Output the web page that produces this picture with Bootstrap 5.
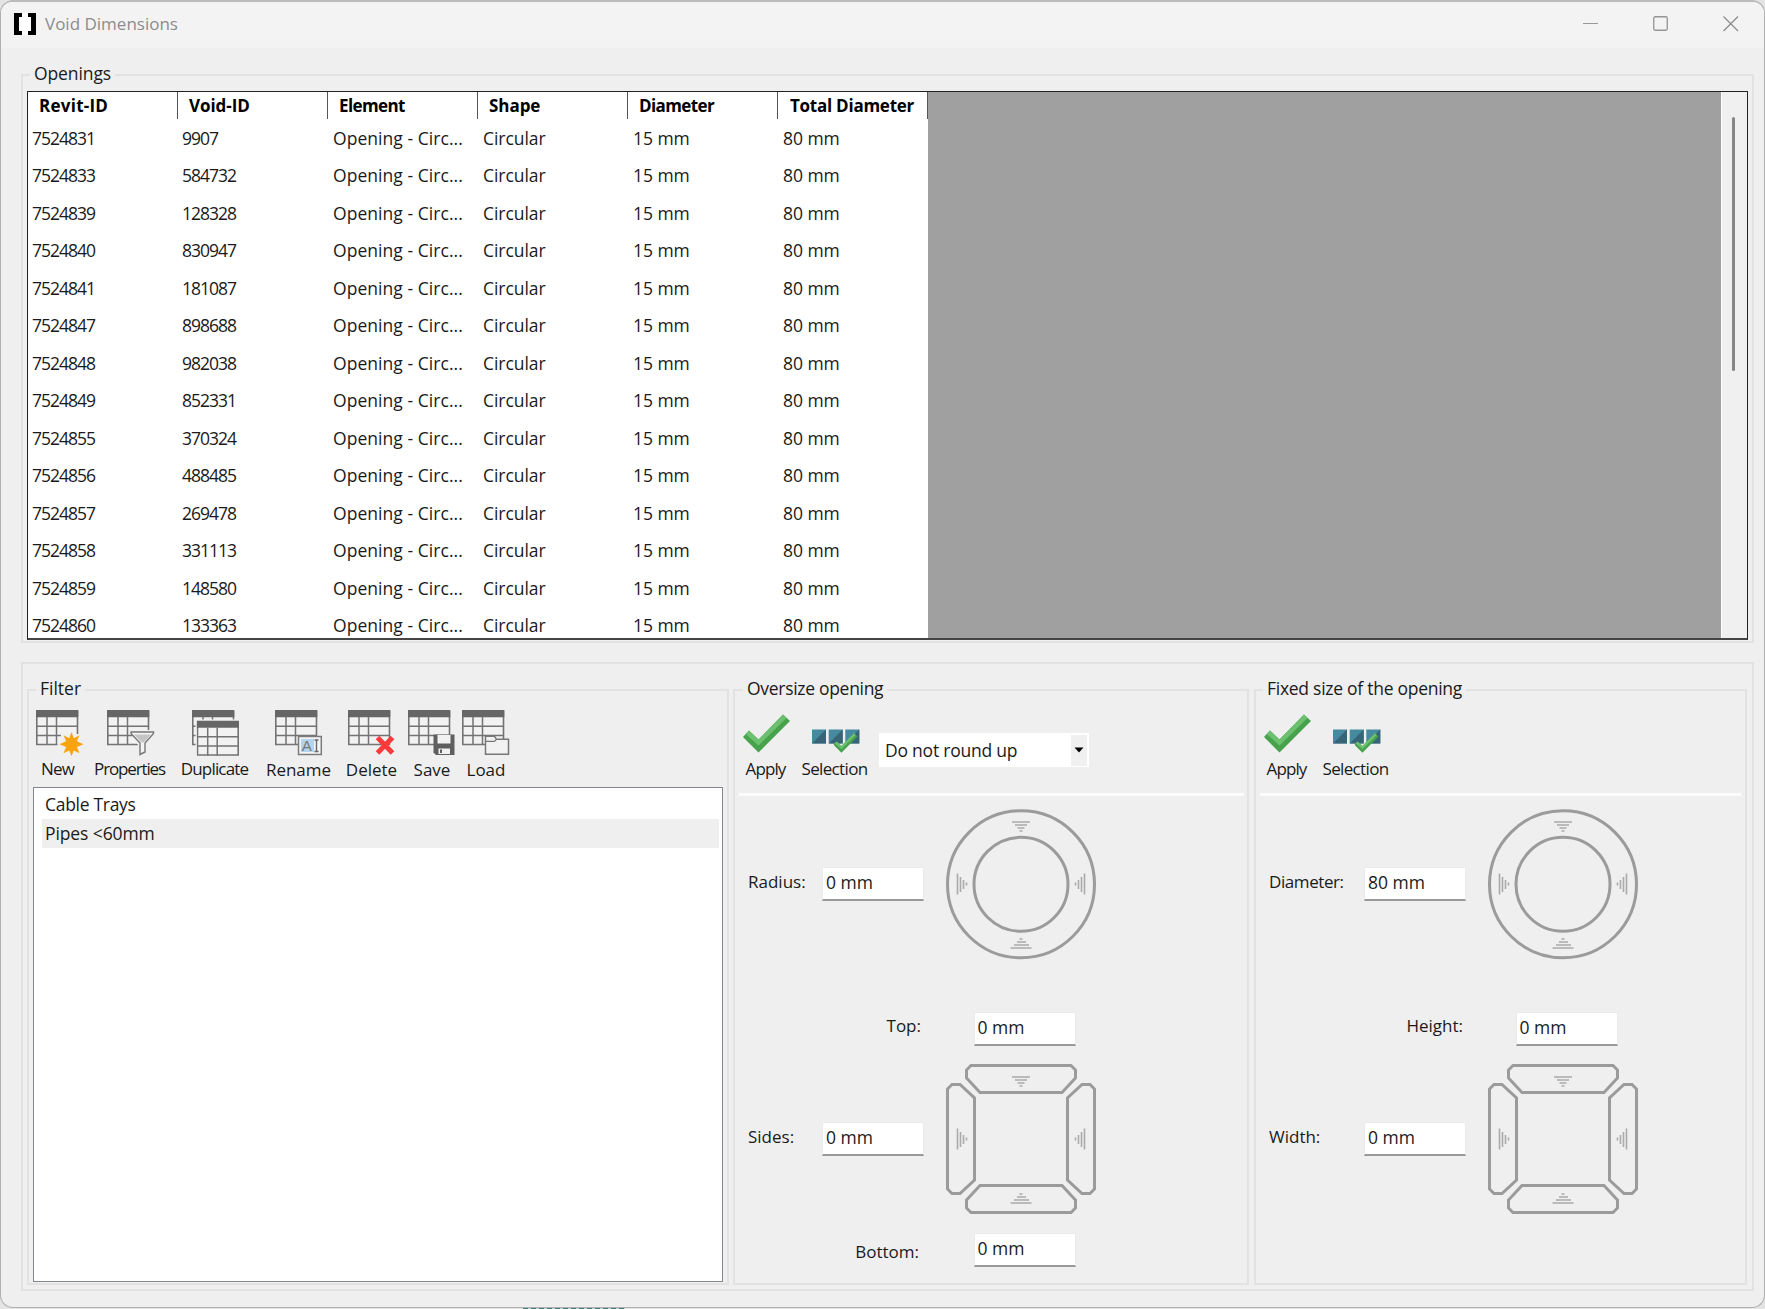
<!DOCTYPE html>
<html lang="en">
<head>
  <meta charset="UTF-8">
  <meta name="viewport" content="width=device-width, initial-scale=1.0">
  <title>Void Dimensions</title>
  <link href="https://cdn.jsdelivr.net/npm/bootstrap@5.3.0/dist/css/bootstrap.min.css" rel="stylesheet">
  <style>
  body {
    background: #e4e4e4;
    color: #1a1a1a;
    font-family: "Open Sans", "Noto Sans", sans-serif;
    font-size: 17.5px;
    line-height: 24px;
    overflow: hidden;
  }
  .app-window {
    width: 1765px;
    height: 1308px;
    background: #efefef;
    border: 1px solid #b0b0b0;
    border-top: 2px solid #bbb;
    border-radius: 13px;
    overflow: hidden;
  }
  .title-bar {
    height: 46px;
    padding: 0 25px 2px 12px;
    background: #f3f3f3;
    color: #8c8c8c;
    font-size: 17px;
  }
  .win-buttons { gap: 54px; }
  .main-area { padding: 26px 10px 0 20px; }

  .group-box { border: 2px solid #e2e2e2; }
  .group-title {
    align-self: flex-start;
    background: #efefef;
    white-space: nowrap;
    height: 24px;
    line-height: 23px;
    margin-top: -14px;
    padding: 0 4px;
  }
  .openings-box { height: 569px; padding: 0 4px; }
  .openings-box > .group-title { margin-left: 3px; letter-spacing: -.1px; }
  .openings-grid {
    height: 549px;
    margin-top: 5px;
    background: #a0a0a0;
    border: 1px solid #222;
    border-bottom: 2px solid #444;
    overflow: hidden;
  }
  .grid-table {
    width: 900px;
    background: #fff;
    flex: none;
  }
  .grid-line {
    display: grid;
    grid-template-columns: repeat(6, 150px);
    height: 37.5px;
    align-items: center;
    white-space: nowrap;
  }
  .grid-line > span { padding-left: 5px; letter-spacing: -.05px; }
  .grid-line > .id-cell { padding-left: 4px; letter-spacing: -1px; }
  .grid-line > .long-cell { letter-spacing: .05px; }
  .grid-head {
    height: 27px;
    font-size: 17px;
    font-weight: 700;
    color: #000;
    align-items: stretch;
  }
  .grid-head > span {
    padding: 2px 0 0 11px;
    border-right: 1px solid #555;
  }
  .grid-head > .head-wide { letter-spacing: .25px; }
  .grid-head > .head-tight { letter-spacing: -.6px; }
  .grid-head > .head-snug { padding-left: 12px; letter-spacing: -.25px; }
  .scroll-track {
    width: 26px;
    background: #f0f0f0;
    border-left: 1px solid #fff;
    padding: 25px 0 0 10px;
  }
  .scroll-thumb {
    width: 3px;
    height: 254px;
    border-radius: 2px;
    background: #868686;
  }

  .settings-box {
    height: 629px;
    margin-top: 19px;
    padding: 25px 5px 4px 4px;
  }
  .filter-box { width: 702px; margin-right: 4px; padding: 0 4px; }
  .oversize-box { width: 516px; margin-right: 5px; }
  .fixed-box { width: 493px; }
  .filter-box > .group-title { margin-left: 3px; }
  .oversize-box > .group-title { margin-left: 8px; letter-spacing: -.3px; }
  .fixed-box > .group-title { margin-left: 7px; letter-spacing: -.27px; }

  .tool-bar { height: 86px; padding-top: 9px; font-size: 17px; }
  .tool-item {
    white-space: nowrap;
    display: flex;
    flex-direction: column;
    align-items: center;
  }
  .tool-item svg { display: block; flex: none; margin-bottom: 1px; }
  .tool-item.lower svg { margin-bottom: 2px; }
  .tool-item.squeezed > span { margin-left: -2px; }
  .w-new { width: 53px; letter-spacing: -.8px; }
  .w-new > span { padding-right: 2px; }
  .w-props { width: 89px; letter-spacing: -1.15px; }
  .w-dup { width: 81px; letter-spacing: -.8px; }
  .w-rename { width: 85px; }
  .w-del { width: 61px; }
  .w-save { width: 60px; }
  .w-load { width: 48px; }
  .filter-list {
    height: 495px;
    background: #fff;
    border: 1px solid #828790;
    padding: 2px 3px 0 8px;
  }
  .filter-item { height: 29px; line-height: 29px; padding-left: 3px; letter-spacing: -.3px; }
  .filter-item.picked { background: #efefef; letter-spacing: -.1px; }

  .size-tools {
    height: 95px;
    margin: 0 3px 0 4px;
    padding: 13px 0 0 4px;
    border-bottom: 3px solid #fbfcfe;
    font-size: 17px;
  }
  .fixed-box .size-tools { margin-right: 4px; }
  .size-tools .tool-item { height: 67px; justify-content: flex-end; }
  .size-tools .tool-item svg { margin-bottom: 4px; }
  .w-apply { width: 47px; letter-spacing: -.9px; }
  .w-sel { width: 67px; margin-left: 12px; letter-spacing: -.65px; }
  .combo {
    width: 210px;
    height: 34px;
    margin: 19px 0 0 10px;
    padding: 0 2px 0 6px;
    background: #fff;
    font-size: 17.5px;
    letter-spacing: -.22px;
  }
  .combo-arrow { width: 16px; height: 31px; background: #f0f0f0; }

  .size-form { padding: 12px 0 0 13px; font-size: 17px; }
  .name-left { width: 74px; padding-bottom: 5px; }
  .fixed-box .name-left { width: 95px; }
  .name-left.snug { letter-spacing: -.42px; }
  .name-right { width: 173px; padding-bottom: 7px; text-align: right; }
  .name-right.low { padding: 4px 2px 0 0; }
  .fixed-box .name-right { width: 194px; }
  .pad-field {
    width: 102px;
    height: 34px;
    line-height: 29px;
    padding-left: 3px;
    background: #fff;
    border: 1px solid #ebebeb;
    border-bottom: 2px solid #999;
    font-size: 17.5px;
    white-space: nowrap;
    flex: none;
  }
  .name-right + .pad-field { margin-left: 52.5px; }
  .shape { width: 152px; height: 152px; display: block; flex: none; margin-left: 21px; }
  .upper-line { margin: 52px 0 17px; }
  .lower-line { margin-top: 18px; }
  .behind {
    width: 102px;
    height: 1px;
    margin-left: 523px;
    background: repeating-linear-gradient(90deg, #3c8078 0 5px, #b9cfcb 5px 8px);
  }
  </style>
</head>
<body>

<svg width="0" height="0" class="position-absolute">
  <defs>
    <symbol id="table" viewBox="0 0 48 46">
      <path d="M.800 1.500h40.700v33H.800z" fill="#f2f2f2" stroke="#737373" stroke-width="1.600"/>
      <path d="M0 0h42.300v7.300H0z" fill="#666"/>
      <path d="M11 7v28M20.500 7v28M1 16.200h41M1 25.500h41" stroke="#737373" stroke-width="1.500" fill="none"/>
    </symbol>
    <symbol id="tick" viewBox="0 0 47 39">
      <path d="M0 23l6-6.500 9.500 9L40 .500l7 6.500-31.500 31.500z" fill="#46a24b"/>
      <path d="M2.500 20l3.500-3.500 9.500 9L40 .500l3.500 3.500-28 27.500z" fill="#6cc070"/>
    </symbol>
    <symbol id="selection" viewBox="0 0 48 24">
      <path d="M0 .5h14v14H0zM16.700.5h14v14h-14zM33.300.5h14v14h-14z" fill="#468aa0"/>
      <path d="M14 .5v14H0zM30.700.5v14h-14zM47.300.5v14h-14z" fill="#376476"/>
      <use href="#tick" x="21.500" y="4" width="24" height="20"/>
    </symbol>
    <symbol id="arrows" viewBox="0 0 152 152">
      <g fill="none" stroke="#aaa" stroke-width="1.600">
        <path d="M67 14h18M70 17h12M72.500 20h7M74.500 23h3"/>
        <path d="M74.500 131h3M72 134h9M69 137h15M65.500 140h21"/>
        <path d="M12.500 65.500v21M15.500 69v15M18.500 72v9M21.500 74.500v3"/>
        <path d="M139.500 65.500v21M136.500 69v15M133.500 72v9M130.500 74.500v3"/>
      </g>
    </symbol>
    <symbol id="round" viewBox="0 0 152 152">
      <circle cx="76" cy="76.300" r="73.500" fill="none" stroke="#9b9b9b" stroke-width="3"/>
      <circle cx="76" cy="76.300" r="47" fill="none" stroke="#9b9b9b" stroke-width="3"/>
      <use href="#arrows"/>
    </symbol>
    <symbol id="square" viewBox="0 0 152 152">
      <g fill="none" stroke="#9b9b9b" stroke-width="3">
        <path id="side" d="M26 2.500h100l4.500 4.500v8L117 29.500H35L21.500 15V7z"/>
        <use href="#side" transform="rotate(90 76 76)"/>
        <use href="#side" transform="rotate(180 76 76)"/>
        <use href="#side" transform="rotate(270 76 76)"/>
      </g>
      <use href="#arrows"/>
    </symbol>
  </defs>
</svg>

<div class="app-window">
  <div class="title-bar d-flex align-items-center justify-content-between">
    <div class="d-flex align-items-center">
      <svg width="24" height="24" viewBox="0 0 24 24"><path d="M1 1h22v22H1z" fill="#fff"/><path d="M1 1h8v4H6v14h3v4H1zM23 1h-8v4h3v14h-3v4h8z" fill="#000"/></svg>
      <span class="ms-2">Void Dimensions</span>
    </div>
    <div class="win-buttons d-flex align-items-center">
      <svg width="16" height="16" viewBox="0 0 16 16"><path d="M0 7.500h15" stroke="#999"/></svg>
      <svg width="16" height="16" viewBox="0 0 16 16"><rect x=".75" y=".75" width="13.500" height="13.500" rx="1.500" fill="none" stroke="#949494" stroke-width="1.300"/></svg>
      <svg width="16" height="16" viewBox="0 0 16 16"><path d="M.5.500l14.500 14.500M15 .500L.5 15" stroke="#8a8a8a" stroke-width="1.200"/></svg>
    </div>
  </div>

  <div class="main-area">
    <!-- Openings -->
    <div class="group-box openings-box d-flex flex-column">
      <span class="group-title">Openings</span>
      <div class="openings-grid d-flex justify-content-between">
        <div class="grid-table" id="gridTable">
          <div class="grid-line grid-head">
            <span class="head-wide">Revit-ID</span><span>Void-ID</span><span class="head-tight">Element</span>
            <span>Shape</span><span class="head-tight">Diameter</span><span class="head-snug">Total Diameter</span>
          </div>
        </div>
        <div class="scroll-track"><div class="scroll-thumb"></div></div>
      </div>
    </div>

    <div class="group-box settings-box d-flex">
      <!-- Filter -->
      <div class="group-box filter-box d-flex flex-column">
        <span class="group-title">Filter</span>
        <div class="tool-bar d-flex">
          <div class="tool-item squeezed w-new">
            <svg width="48" height="46"><use href="#table"/><path d="M21.500 32H48v14H21.500zM25 24h23v22H25z" fill="#efefef"/><path d="M35.500 22l2.300 6.300 5.700-3-2.600 6 6.600 3-6.600 2.800 2.600 6.200-5.700-2.800-2.300 5.700-2.300-5.700-5.700 2.800 2.600-6.200-6.600-2.800 6.600-3-2.600-6 5.700 3z" fill="#f9a30e"/></svg>
            <span>New</span>
          </div>
          <div class="tool-item squeezed w-props">
            <svg width="48" height="46"><use href="#table"/><path d="M22 20h26v26H31V35z" fill="#efefef"/><path d="M24 22h22.500v1.500L38 33v9l-5 2.500V33l-9-9.500z" fill="#f4f4f4" stroke="#777" stroke-width="1.400"/><path d="M27 24.500h17l-7.500 8h-2z" fill="#c4c4c4"/></svg>
            <span>Properties</span>
          </div>
          <div class="tool-item squeezed w-dup">
            <svg width="48" height="46"><use href="#table" width="48" height="46"/><path d="M3.500 9.500H48V46H3.500z" fill="#efefef"/><use href="#table" x="4.700" y="10.500" width="48" height="46"/></svg>
            <span>Duplicate</span>
          </div>
          <div class="tool-item lower w-rename">
            <svg width="48" height="46"><use href="#table"/><path d="M23.500 26.500h22.800v18H23.500z" fill="#f4f4f4" stroke="#7b7b7b" stroke-width="1.500"/><path d="M26 29h13v13H26z" fill="#b4d3ec"/><path d="M39.500 30h4M41.500 30v11.500M39.500 41.500h4" stroke="#666" stroke-width="1.400" fill="none"/><text x="26.800" y="41" font-size="15" fill="#777" font-family="Liberation Sans, sans-serif">A</text></svg>
            <span>Rename</span>
          </div>
          <div class="tool-item lower w-del">
            <svg width="48" height="46"><use href="#table"/><path d="M29.500 27.500l15 15.500M44.500 27.500L29.500 43" stroke="#fc3a3a" stroke-width="5"/></svg>
            <span>Delete</span>
          </div>
          <div class="tool-item lower w-save">
            <svg width="48" height="46"><use href="#table"/><path d="M25.500 24.500h21V45H28l-2.500-2.500z" fill="#5f5f5f"/><path d="M29.500 25h13v8.500h-13zM30.500 38.500h11.500V44H30.500z" fill="#f1f1f1"/><path d="M32 39.500h2V43h-2z" fill="#5f5f5f"/></svg>
            <span>Save</span>
          </div>
          <div class="tool-item lower w-load">
            <svg width="48" height="46"><use href="#table"/><path d="M23.500 44.300v-18h9l2 3h12v15z" fill="#f2f2f2" stroke="#777" stroke-width="1.500"/><path d="M24 31.300h8.500l2-2" fill="none" stroke="#777" stroke-width="1.200"/></svg>
            <span>Load</span>
          </div>
        </div>
        <div class="filter-list">
          <div class="filter-item">Cable Trays</div>
          <div class="filter-item picked">Pipes &lt;60mm</div>
        </div>
      </div>

      <!-- Oversize -->
      <div class="group-box oversize-box d-flex flex-column">
        <span class="group-title">Oversize opening</span>
        <div class="size-tools d-flex">
          <div class="tool-item squeezed w-apply"><svg width="47" height="39"><use href="#tick"/></svg><span>Apply</span></div>
          <div class="tool-item squeezed w-sel"><svg width="48" height="24"><use href="#selection"/></svg><span>Selection</span></div>
          <div class="combo d-flex align-items-center justify-content-between">
            <span>Do not round up</span>
            <span class="combo-arrow d-flex align-items-center justify-content-center"><svg width="10" height="6" viewBox="0 0 10 6"><path d="M.5.500h9L5 5.500z" fill="#000"/></svg></span>
          </div>
        </div>
        <div class="size-form">
          <div class="d-flex align-items-center">
            <div class="name-left">Radius:</div><div class="pad-field">0 mm</div>
            <svg class="shape"><use href="#round"/></svg>
          </div>
          <div class="d-flex align-items-center upper-line"><div class="name-right">Top:</div><div class="pad-field">0 mm</div></div>
          <div class="d-flex align-items-center">
            <div class="name-left">Sides:</div><div class="pad-field">0 mm</div>
            <svg class="shape"><use href="#square"/></svg>
          </div>
          <div class="d-flex align-items-center lower-line"><div class="name-right low">Bottom:</div><div class="pad-field">0 mm</div></div>
        </div>
      </div>

      <!-- Fixed size -->
      <div class="group-box fixed-box d-flex flex-column">
        <span class="group-title">Fixed size of the opening</span>
        <div class="size-tools d-flex">
          <div class="tool-item squeezed w-apply"><svg width="47" height="39"><use href="#tick"/></svg><span>Apply</span></div>
          <div class="tool-item squeezed w-sel"><svg width="48" height="24"><use href="#selection"/></svg><span>Selection</span></div>
        </div>
        <div class="size-form">
          <div class="d-flex align-items-center">
            <div class="name-left snug">Diameter:</div><div class="pad-field">80 mm</div>
            <svg class="shape"><use href="#round"/></svg>
          </div>
          <div class="d-flex align-items-center upper-line"><div class="name-right">Height:</div><div class="pad-field">0 mm</div></div>
          <div class="d-flex align-items-center">
            <div class="name-left">Width:</div><div class="pad-field">0 mm</div>
            <svg class="shape"><use href="#square"/></svg>
          </div>
        </div>
      </div>
    </div>
  </div>
</div>
<div class="behind"></div>

<script src="https://cdn.jsdelivr.net/npm/bootstrap@5.3.0/dist/js/bootstrap.bundle.min.js"></script>
<script>
const openings = [
  ['7524831', '9907'],
  ['7524833', '584732'],
  ['7524839', '128328'],
  ['7524840', '830947'],
  ['7524841', '181087'],
  ['7524847', '898688'],
  ['7524848', '982038'],
  ['7524849', '852331'],
  ['7524855', '370324'],
  ['7524856', '488485'],
  ['7524857', '269478'],
  ['7524858', '331113'],
  ['7524859', '148580'],
  ['7524860', '133363']
];

const gridTable = document.getElementById('gridTable');

openings.forEach(([revitId, voidId]) => {
  const line = document.createElement('div');
  line.className = 'grid-line';
  line.innerHTML = `
    <span class="id-cell">${revitId}</span>
    <span class="id-cell">${voidId}</span>
    <span class="long-cell">Opening - Circ...</span>
    <span>Circular</span>
    <span>15 mm</span>
    <span>80 mm</span>`;
  gridTable.appendChild(line);
});
</script>
</body>
</html>
